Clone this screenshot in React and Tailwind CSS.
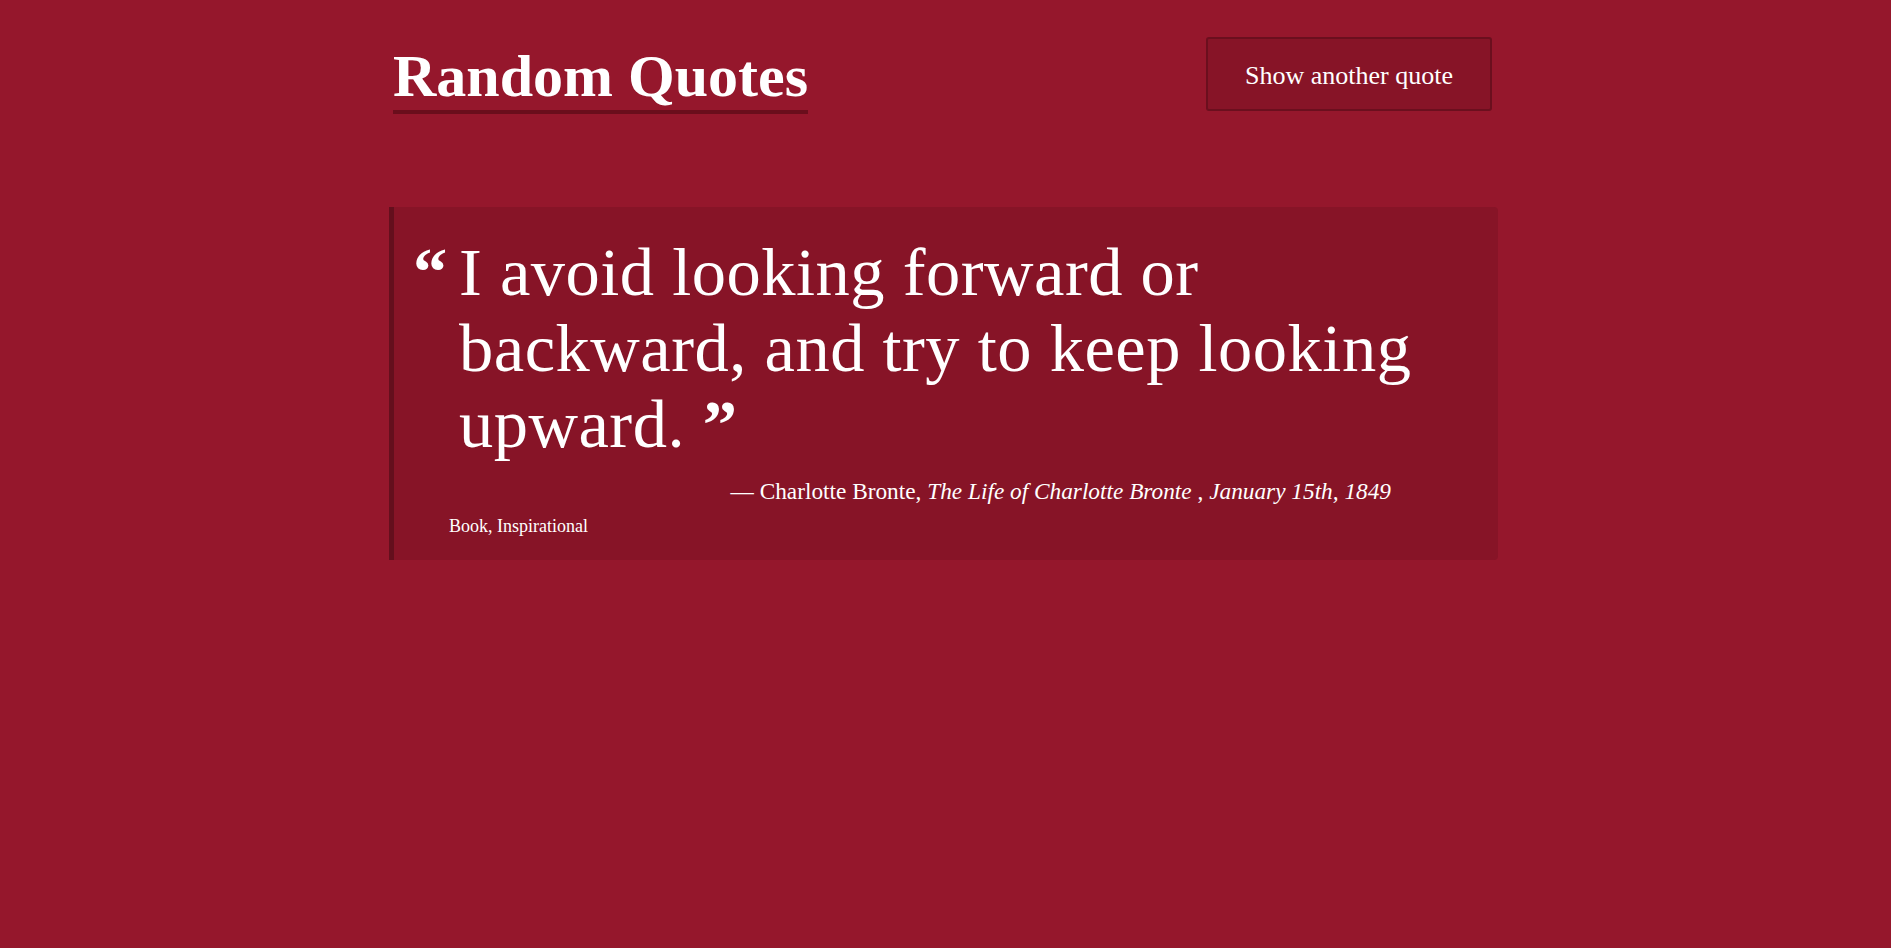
export default function App() {
  return (
    <div className="min-h-screen w-full bg-[#95172c] font-['Liberation_Serif',serif] text-white">
      <div className="mx-auto w-[1113px] pr-[4px]">
        <header className="flex items-start justify-between pl-[4px] pr-[6px] pt-[37px]">
          <h1 className="mt-[9px] border-b-4 border-[#6a0e1c] pb-[4px] text-[60px] font-bold leading-[60px]">
            Random Quotes
          </h1>
          <button className="flex h-[74px] w-[286px] items-center justify-center rounded-[3px] border-2 border-[#6b0f1e] bg-[#871427] pt-[4px] text-[26px] leading-none text-white">
            Show another quote
          </button>
        </header>

        <blockquote className="mt-[93px] rounded-r-[4px] border-l-[5px] border-[#640f1d] bg-[#871427] pb-[23px] pl-[19px] pr-[40px] pt-[27px]">
          <div className="flex items-baseline">
            <span className="w-[46px] shrink-0 text-[68.5px] font-bold leading-[76px]">“</span>
            <p className="text-[68.5px] leading-[76px] tracking-[0.5px] after:font-bold after:content-['_”']">
              I avoid looking forward or backward, and try to keep looking upward.
            </p>
          </div>
          <div className="mr-[67px] mt-[15px] text-right text-[23.3px] leading-[28px]">
            — Charlotte Bronte, <cite className="italic">The Life of Charlotte Bronte</cite> ,{" "}
            <span className="italic">January 15th, 1849</span>
          </div>
          <div className="mt-[10px] pl-[36px] text-[18px] leading-[22px]">Book, Inspirational</div>
        </blockquote>
      </div>
    </div>
  );
}
